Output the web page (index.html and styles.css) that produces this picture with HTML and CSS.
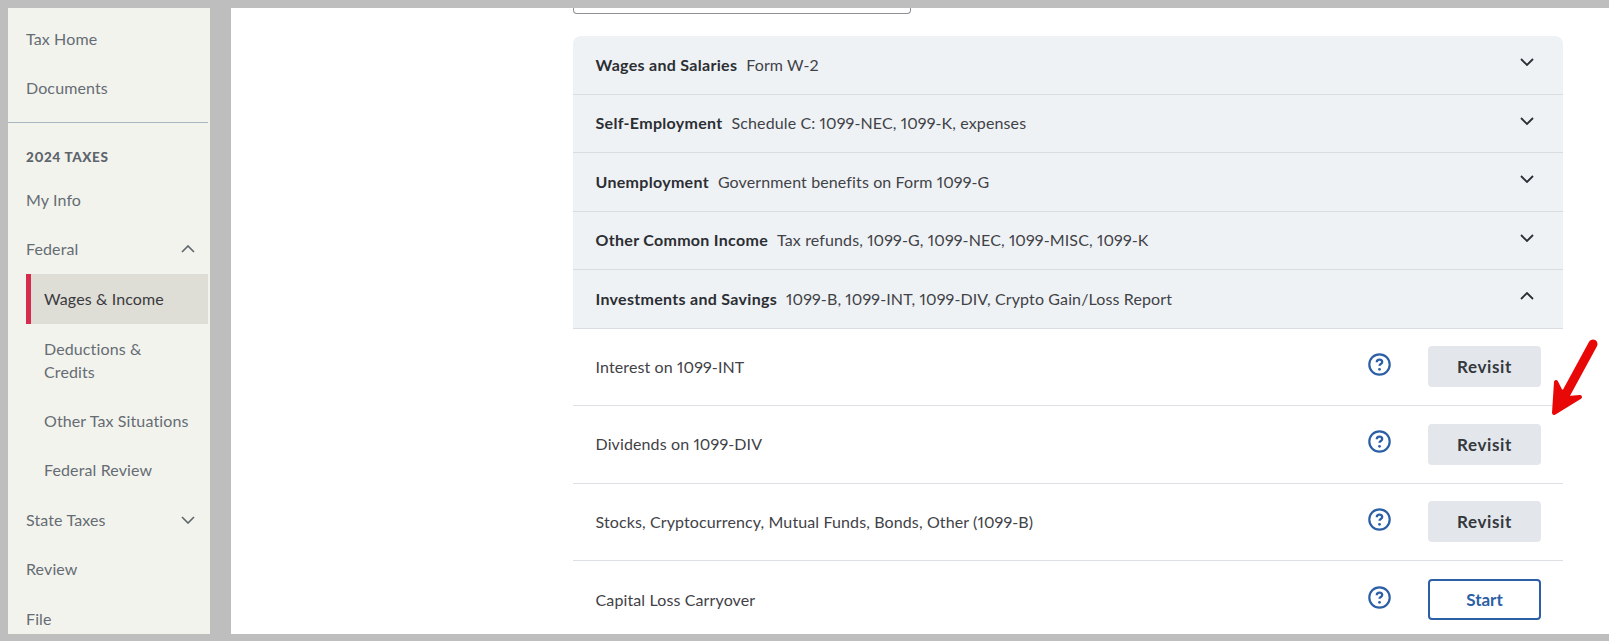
FILE: index.html
```html
<!DOCTYPE html>
<html>
<head>
    <title>2024 Taxes - Wages &amp; Income</title>
    <link rel="stylesheet" href="styles.css">
</head>
<body>
    <div class="shell">
        <nav class="sidebar">
            <a class="nav-item first">Tax Home</a>
            <a class="nav-item">Documents</a>
            <hr class="nav-divider">
            <div class="nav-heading">2024 TAXES</div>
            <a class="nav-item">My Info</a>
            <a class="nav-item has-chevron">Federal
                <svg class="nav-chevron" viewBox="0 0 14 8"><path d="M1 7l6-6 6 6"/></svg>
            </a>
            <a class="nav-item sub active">Wages &amp; Income</a>
            <a class="nav-item sub two-line">Deductions &amp;<br>Credits</a>
            <a class="nav-item sub">Other Tax Situations</a>
            <a class="nav-item sub">Federal Review</a>
            <a class="nav-item has-chevron">State Taxes
                <svg class="nav-chevron" viewBox="0 0 14 8"><path d="M1 1l6 6 6-6"/></svg>
            </a>
            <a class="nav-item">Review</a>
            <a class="nav-item">File</a>
        </nav>
        <main class="main">
            <div class="search-box"></div>
            <section class="accordion">
                <div class="acc-row">
                    <span class="acc-title">Wages and Salaries</span>
                    <span class="acc-desc">Form W-2</span>
                    <svg class="acc-chevron" viewBox="0 0 14 8"><path d="M1 1l6 6 6-6"/></svg>
                </div>
                <div class="acc-row">
                    <span class="acc-title">Self-Employment</span>
                    <span class="acc-desc">Schedule C: 1099-NEC, 1099-K, expenses</span>
                    <svg class="acc-chevron" viewBox="0 0 14 8"><path d="M1 1l6 6 6-6"/></svg>
                </div>
                <div class="acc-row">
                    <span class="acc-title">Unemployment</span>
                    <span class="acc-desc">Government benefits on Form 1099-G</span>
                    <svg class="acc-chevron" viewBox="0 0 14 8"><path d="M1 1l6 6 6-6"/></svg>
                </div>
                <div class="acc-row">
                    <span class="acc-title">Other Common Income</span>
                    <span class="acc-desc">Tax refunds, 1099-G, 1099-NEC, 1099-MISC, 1099-K</span>
                    <svg class="acc-chevron" viewBox="0 0 14 8"><path d="M1 1l6 6 6-6"/></svg>
                </div>
                <div class="acc-row">
                    <span class="acc-title">Investments and Savings</span>
                    <span class="acc-desc">1099-B, 1099-INT, 1099-DIV, Crypto Gain/Loss Report</span>
                    <svg class="acc-chevron" viewBox="0 0 14 8"><path d="M1 7l6-6 6 6"/></svg>
                </div>
                <div class="item-row">
                    <span class="item-label">Interest on 1099-INT</span>
                    <svg class="help-icon" viewBox="0 0 23 23"><circle cx="11.5" cy="11.5" r="10.2"/><path class="mark" d="M8.8 9.3c0-1.6 1.2-2.6 2.7-2.6s2.7 1 2.7 2.4c0 1.9-2.7 2-2.7 3.7"/><circle class="dot" cx="11.5" cy="16.3" r="1.4"/></svg>
                    <button class="btn revisit">Revisit</button>
                </div>
                <div class="item-row">
                    <span class="item-label">Dividends on 1099-DIV</span>
                    <svg class="help-icon" viewBox="0 0 23 23"><circle cx="11.5" cy="11.5" r="10.2"/><path class="mark" d="M8.8 9.3c0-1.6 1.2-2.6 2.7-2.6s2.7 1 2.7 2.4c0 1.9-2.7 2-2.7 3.7"/><circle class="dot" cx="11.5" cy="16.3" r="1.4"/></svg>
                    <button class="btn revisit">Revisit</button>
                </div>
                <div class="item-row">
                    <span class="item-label">Stocks, Cryptocurrency, Mutual Funds, Bonds, Other (1099-B)</span>
                    <svg class="help-icon" viewBox="0 0 23 23"><circle cx="11.5" cy="11.5" r="10.2"/><path class="mark" d="M8.8 9.3c0-1.6 1.2-2.6 2.7-2.6s2.7 1 2.7 2.4c0 1.9-2.7 2-2.7 3.7"/><circle class="dot" cx="11.5" cy="16.3" r="1.4"/></svg>
                    <button class="btn revisit">Revisit</button>
                </div>
                <div class="item-row last">
                    <span class="item-label">Capital Loss Carryover</span>
                    <svg class="help-icon" viewBox="0 0 23 23"><circle cx="11.5" cy="11.5" r="10.2"/><path class="mark" d="M8.8 9.3c0-1.6 1.2-2.6 2.7-2.6s2.7 1 2.7 2.4c0 1.9-2.7 2-2.7 3.7"/><circle class="dot" cx="11.5" cy="16.3" r="1.4"/></svg>
                    <button class="btn start">Start</button>
                </div>
            </section>
        </main>
    </div>
    <!-- annotation drawn over the screenshot -->
    <svg class="arrow" viewBox="0 0 60 90"><path d="M48 9C40 24 30 42 17 66"/><path class="arrow-head" d="M11 47L9 78L35 62L23 63L15 55Z"/></svg>
</body>
</html>
```

FILE: styles.css
```css
html, body {
    height: 100%;
    margin: 0;
    overflow: hidden;
}
body {
    background-color: #bebebe;
    font-family: Lato, "Open Sans", sans-serif;
    font-size: 16px;
    line-height: 24px;
    letter-spacing: 0.12px;
    font-variant-numeric: proportional-nums;
}
.shell {
    display: flex;
    height: 626px;
    margin: 8px 0 0 8px;
    overflow: hidden;
}
.sidebar {
    flex: none;
    width: 202px;
    height: 626px;
    padding-top: 6px;
    box-sizing: border-box;
    background: #f3f3ee;
    color: #656c73;
    overflow: hidden;
}
.nav-item {
    display: flex;
    align-items: center;
    justify-content: space-between;
    width: 182px;
    box-sizing: border-box;
    margin-left: 18px;
    padding: 12.75px 0;
}
.nav-item.sub {
    display: block;
    padding-left: 18px;
}
.nav-item.two-line {
    padding: 12.6px 0 12.6px 18px;
    line-height: 23.5px;
}
.nav-item.active {
    height: 50px;
    padding: 13px 0 13px 13px;
    border-left: 5px solid #d52b4d;
    background: #deddd6;
    color: #393a3d;
}
.nav-chevron {
    width: 14px;
    height: 8px;
    margin-right: 13px;
    fill: none;
    stroke: #5d646b;
    stroke-width: 1.6;
}
.nav-divider {
    width: 200px;
    margin: 9px 0 0;
    border: 0;
    border-top: 1px solid #a9b8c0;
}
.nav-heading {
    margin: 22px 0 6px 18px;
    font-size: 13.5px;
    font-weight: 900;
    letter-spacing: 0.6px;
    color: #5d646b;
}
.main {
    flex: none;
    width: 1378px;
    height: 626px;
    margin-left: 21px;
    padding-left: 342px;
    box-sizing: border-box;
    background: #fff;
    overflow: hidden;
}
.search-box {
    width: 338px;
    height: 6px;
    box-sizing: border-box;
    border: 1px solid #8d9096;
    border-top: 0;
    border-radius: 0 0 4px 4px;
}
.accordion {
    width: 990px;
    margin-top: 22px;
    color: #3f4247;
}
.acc-row {
    display: flex;
    align-items: center;
    height: 58.5px;
    box-sizing: border-box;
    padding: 0 22px 0 22.5px;
    background: #eff2f5;
    border-bottom: 1px solid #d9dde2;
}
.acc-row:first-child {
    border-radius: 8px 8px 0 0;
}
.acc-title {
    margin-right: 9px;
    font-weight: 700;
    letter-spacing: 0.3px;
    color: #2b2e33;
}
.acc-chevron {
    width: 14px;
    height: 8px;
    margin: -5px 7px 0 auto;
    fill: none;
    stroke: #2b2e33;
    stroke-width: 1.8;
}
.item-row {
    display: flex;
    align-items: center;
    height: 77.5px;
    box-sizing: border-box;
    padding: 0 22px 0 22.5px;
    border-bottom: 1px solid #dcdfe3;
}
.item-row.last {
    border-bottom: 0;
}
.item-label {
    flex: 1;
}
.help-icon {
    width: 23px;
    height: 23px;
    margin: 0 37px 5px 0;
    fill: none;
    stroke: #2c5fa5;
    stroke-width: 2.2;
}
.help-icon .mark {
    stroke-width: 2.3;
}
.help-icon .dot {
    fill: #2c5fa5;
    stroke: none;
}
.btn {
    width: 113px;
    height: 41px;
    box-sizing: border-box;
    border-radius: 4px;
    font-family: inherit;
    font-size: 17px;
    font-weight: 700;
}
.revisit {
    border: 0;
    background: #e3e7eb;
    color: #35383d;
    letter-spacing: 0.6px;
}
.start {
    border: 2px solid #2c5fa5;
    background: #fff;
    color: #2c5fa5;
}
.arrow {
    position: absolute;
    top: 335px;
    left: 1545px;
    width: 60px;
    height: 90px;
    fill: none;
    stroke: #e80808;
    stroke-width: 9;
    stroke-linecap: round;
    stroke-linejoin: round;
}
.arrow .arrow-head {
    fill: #e80808;
    stroke-width: 4;
}
```
